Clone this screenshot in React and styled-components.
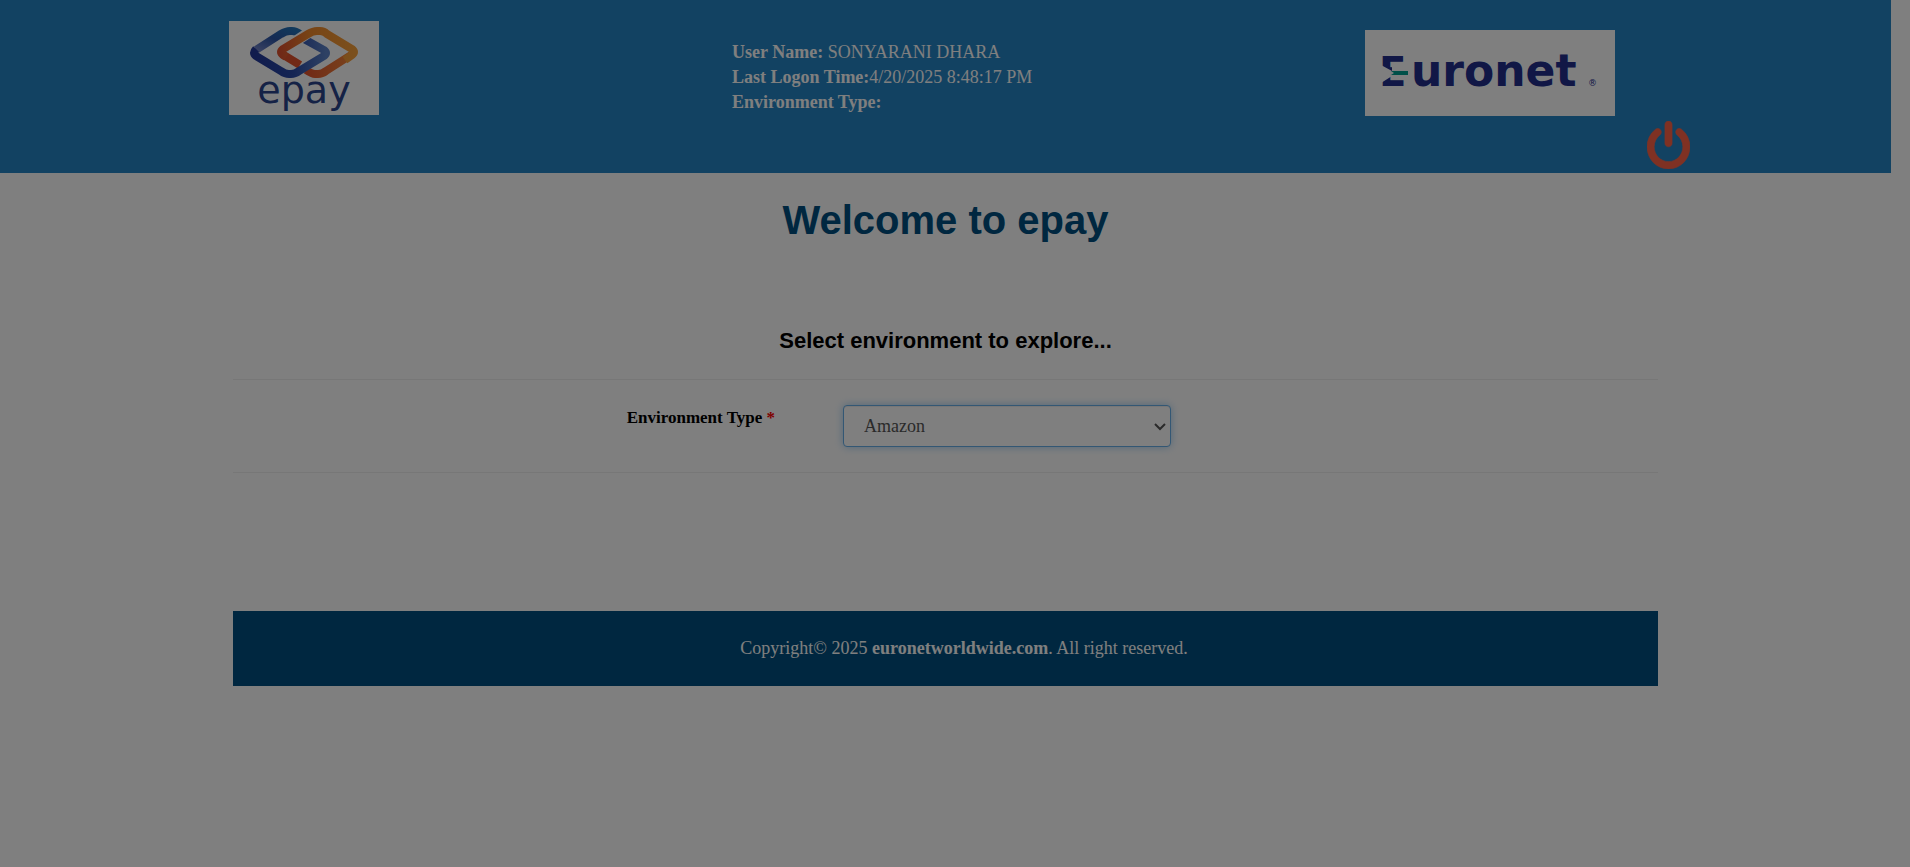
import React from "react";
import styled, { createGlobalStyle } from "styled-components";

const GlobalStyle = createGlobalStyle`
  *, *::before, *::after { box-sizing: border-box; }
  body {
    margin: 0;
    background: #fff;
    color: #000;
    font: 18px/25px "Liberation Serif", "Times New Roman", serif;
  }
`;

const Page = styled.div`
  padding-right: 19px;
`;

const Header = styled.header`
  display: grid;
  grid-template-columns: 503fr 633fr 325fr;
  align-items: start;
  min-height: 173px;
  padding: 0 201px 0 229px;
  background: #2484c4;
`;

const BrandCell = styled.div`
  padding-top: 21px;
`;

const SessionInfo = styled.div`
  padding-top: 40px;
  color: #fff;
`;

const ActionsCell = styled.div`
  display: flex;
  flex-direction: column;
  gap: 5px;
  padding-top: 30px;
`;

const Logo = styled.svg`
  display: block;
  background: #fff;
`;

const PowerButton = styled.button`
  align-self: flex-end;
  padding: 0;
  border: 0;
  background: none;
  color: tomato;
  cursor: pointer;

  svg { display: block; }
`;

const Container = styled.main`
  width: 100%;
  max-width: 1425px;
  margin: 0 auto;
`;

const Title = styled.h1`
  margin: 23px 0 0;
  color: #004e80;
  font: bold 40px/48px "Liberation Sans", Arial, sans-serif;
  text-align: center;
`;

const Subtitle = styled.h3`
  margin: 82px 0 23px;
  font: bold 22px/30px "Liberation Sans", Arial, sans-serif;
  text-align: center;
`;

const FormRow = styled.form`
  display: grid;
  grid-template-columns: 610fr 815fr;
  padding: 25px 0;
  border: solid #eee;
  border-width: 1px 0;
`;

const Label = styled.label`
  justify-self: end;
  margin-right: 68px;
  font-size: 17px;
  font-weight: bold;
`;

const Required = styled.span`
  color: red;
`;

const SelectBox = styled.div`
  position: relative;
  width: 328px;

  svg {
    position: absolute;
    top: 17px;
    right: 4px;
    pointer-events: none;
  }
`;

const Select = styled.select`
  display: block;
  width: 100%;
  height: 42px;
  padding: 6px 20px;
  appearance: none;
  border: 1px solid #66afe9;
  border-radius: 4px;
  outline: 0;
  background: #fff;
  color: #555;
  font: 18px/25px "Liberation Serif", "Times New Roman", serif;
  box-shadow: inset 0 1px 1px rgba(0, 0, 0, 0.075), 0 0 8px rgba(102, 175, 233, 0.6);
`;

const Footer = styled.footer`
  margin-top: 138px;
  padding: 25px 0 25px 37px;
  background: #004e80;
  color: #fff;
  text-align: center;
`;

const Backdrop = styled.div`
  position: fixed;
  inset: 0;
  background: rgba(0, 0, 0, 0.5);
`;

function EpayLogo() {
  return (
    <Logo width="150" height="94" viewBox="0 0 150 94" role="img" aria-label="epay">
      <defs>
        <linearGradient id="blueLoop" x1="0" y1="0" x2="1" y2="0">
          <stop offset="0" stopColor="#22389a" />
          <stop offset="0.55" stopColor="#2a4aa8" />
          <stop offset="1" stopColor="#5c83c8" />
        </linearGradient>
        <linearGradient id="blueTop" x1="0" y1="1" x2="1" y2="0">
          <stop offset="0" stopColor="#7384c6" />
          <stop offset="0.5" stopColor="#2c56a8" />
          <stop offset="1" stopColor="#2273b8" />
        </linearGradient>
        <linearGradient id="orangeLoop" x1="0" y1="0" x2="1" y2="0">
          <stop offset="0" stopColor="#e0532e" />
          <stop offset="0.4" stopColor="#f08a2c" />
          <stop offset="1" stopColor="#f7a03a" />
        </linearGradient>
        <linearGradient id="orangeBase" x1="0" y1="0" x2="1" y2="0">
          <stop offset="0" stopColor="#e2532c" />
          <stop offset="1" stopColor="#f2853a" />
        </linearGradient>
      </defs>
      <g fill="none" strokeWidth="8">
        <path d="M53 33L71 44" stroke="#e2532c" />
        <path d="M77 49Q83 53 86 53H89Q93 53 97 50L122 34" stroke="url(#orangeBase)" />
        <path d="M27 29L52 13Q57 10 61 10H63Q67 10 71 13" stroke="url(#blueTop)" />
        <path d="M75 18L95 29Q99 32 95 35L70 50Q66 53 62 53H60Q56 53 52 50L27 35Q23 32 27 28" stroke="url(#blueLoop)" />
        <path d="M64 22L82 10" stroke="#fff" strokeWidth="11" />
        <path d="M57 36L54 34Q50 31 54 28L79 13Q84 10 88 10H91Q95 10 98 13L123 28Q127 31 123 34L116 39" stroke="url(#orangeLoop)" />
      </g>
      <text x="75" y="82" textAnchor="middle" fill="#2a458c" fontFamily="DejaVu Sans, sans-serif" fontSize="38">
        epay
      </text>
    </Logo>
  );
}

function EuronetLogo() {
  return (
    <Logo width="250" height="86" viewBox="0 0 250 86" role="img" aria-label="Euronet">
      <g fill="#222e8c" fontFamily="DejaVu Sans, sans-serif">
        <text x="14" y="56" fontSize="40" fontWeight="bold">E</text>
        <text x="46" y="56" fontSize="44" fontWeight="bold">uronet</text>
        <text x="223" y="56" fontSize="9">®</text>
      </g>
      <path d="M27 33H46V50H27V46L16 53V35L27 41Z" fill="#fff" />
      <path d="M26 41H43V45H26L29 43Z" fill="#00a090" />
    </Logo>
  );
}

function PowerIcon() {
  return (
    <svg width="43" height="48" viewBox="128 0 1536 1664" preserveAspectRatio="none" fill="currentColor" stroke="currentColor" strokeWidth="20" aria-hidden="true">
      <path d="M1664 896q0 156-61 298t-164 245-245 164-298 61-298-61-245-164-164-245-61-298q0-182 80.5-343t226.5-270q43-32 95.5-25t83.5 50q32 42 24.5 94.5t-49.5 84.5q-98 74-151.5 181t-53.5 228q0 104 40.5 198.5t109.5 163.5 163.5 109.5 198.5 40.5 198.5-40.5 163.5-109.5 109.5-163.5 40.5-198.5q0-121-53.5-228t-151.5-181q-42-32-49.5-84.5t24.5-94.5q31-43 84-50t95 25q146 109 226.5 270t80.5 343zm-640-768v640q0 52-38 90t-90 38-90-38-38-90v-640q0-52 38-90t90-38 90 38 38 90z" />
    </svg>
  );
}

function ChevronIcon() {
  return (
    <svg width="14" height="10" viewBox="0 0 14 10" fill="none" stroke="#555" strokeWidth="2" aria-hidden="true">
      <path d="M2 2L7 7L12 2" />
    </svg>
  );
}

export default function App() {
  return (
    <>
      <GlobalStyle />
      <Page>
        <Header>
          <BrandCell><EpayLogo /></BrandCell>
          <SessionInfo>
            <div><b>User Name:</b> SONYARANI DHARA</div>
            <div><b>Last Logon Time:</b>4/20/2025 8:48:17 PM</div>
            <div><b>Environment Type:</b></div>
          </SessionInfo>
          <ActionsCell>
            <EuronetLogo />
            <PowerButton type="button" aria-label="Log out"><PowerIcon /></PowerButton>
          </ActionsCell>
        </Header>
        <Container>
          <Title>Welcome to epay</Title>
          <Subtitle>Select environment to explore...</Subtitle>
          <FormRow>
            <Label htmlFor="environment">Environment Type <Required>*</Required></Label>
            <SelectBox>
              <Select id="environment" defaultValue="Amazon">
                <option>Amazon</option>
              </Select>
              <ChevronIcon />
            </SelectBox>
          </FormRow>
          <Footer>
            Copyright© 2025 <b>euronetworldwide.com</b>. All right reserved.
          </Footer>
        </Container>
      </Page>
      <Backdrop />
    </>
  );
}
